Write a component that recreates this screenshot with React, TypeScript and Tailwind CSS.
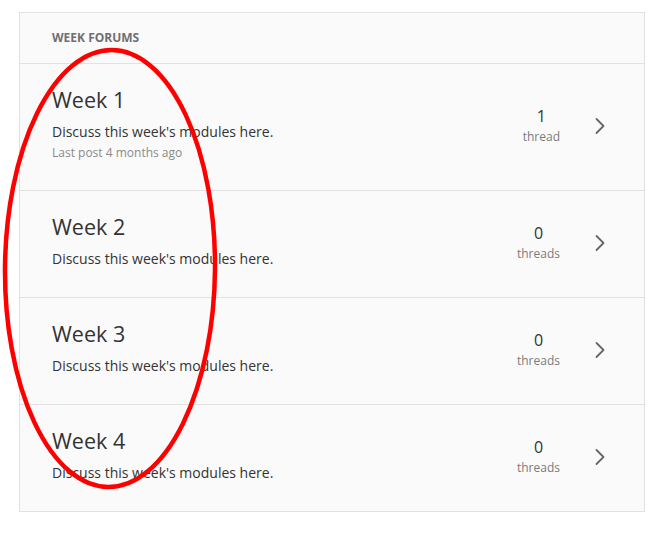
import React from "react";

type Forum = { title: string; count: number; unit: string; lastPost?: string };

const forums: Forum[] = [
  { title: "Week 1", count: 1, unit: "thread", lastPost: "Last post 4 months ago" },
  { title: "Week 2", count: 0, unit: "threads" },
  { title: "Week 3", count: 0, unit: "threads" },
  { title: "Week 4", count: 0, unit: "threads" },
];

function Chevron() {
  return (
    <div className="ml-[34px] shrink-0 pt-[4px]">
      <svg width="12" height="18" viewBox="0 0 12 18" className="block">
        <polyline
          points="2.5,2 9.5,9 2.5,16"
          fill="none"
          stroke="#666666"
          strokeWidth="1.8"
          strokeLinecap="round"
          strokeLinejoin="round"
        />
      </svg>
    </div>
  );
}

export default function App() {
  return (
    <div
      className="relative w-[661px] h-[538px] bg-white pt-[12px] pl-[19px] pr-[16px]"
      style={{ fontFamily: '"Open Sans", "Noto Sans", sans-serif' }}
    >
      <div className="border border-[#e1e1e1] bg-[#fafafa]">
        <div className="pl-[32px] pt-[17px] pb-[17px] border-b border-[#e1e1e1]">
          <div className="text-[12px] leading-[16px] font-bold text-[#6f6f6f] uppercase">Week Forums</div>
        </div>
        {forums.map((f, i) => (
          <div
            key={f.title}
            className={`flex items-center pl-[32px] pr-[38px] pt-[21px] pb-[28px] ${
              i < forums.length - 1 ? "border-b border-[#e1e1e1]" : ""
            }`}
          >
            <div className="flex-1 min-w-0">
              <div className="text-[21.5px] leading-[30px] text-[#333333]">{f.title}</div>
              <div className="mt-[7px] text-[14px] leading-[20px] text-[#333333]">
                Discuss this week's modules here.
              </div>
              {f.lastPost && (
                <div className="mt-[2px] text-[12px] leading-[18px] text-[#8a8a8a]">{f.lastPost}</div>
              )}
            </div>
            <div className="flex flex-col items-center pt-[4px]">
              <div className="text-[16px] leading-[20px] text-[#333333]">{f.count}</div>
              <div className="mt-[3px] text-[12px] leading-[16px] text-[#7a7a7a]">{f.unit}</div>
            </div>
            <Chevron />
          </div>
        ))}
      </div>
      <svg
        className="absolute left-0 top-0 pointer-events-none"
        width="661"
        height="538"
        viewBox="0 0 661 538"
      >
        <ellipse
          cx="110"
          cy="268.5"
          rx="105"
          ry="218.5"
          fill="none"
          stroke="#ff0000"
          strokeWidth="4.5"
          transform="rotate(0.5 110 268.5)"
        />
      </svg>
    </div>
  );
}
